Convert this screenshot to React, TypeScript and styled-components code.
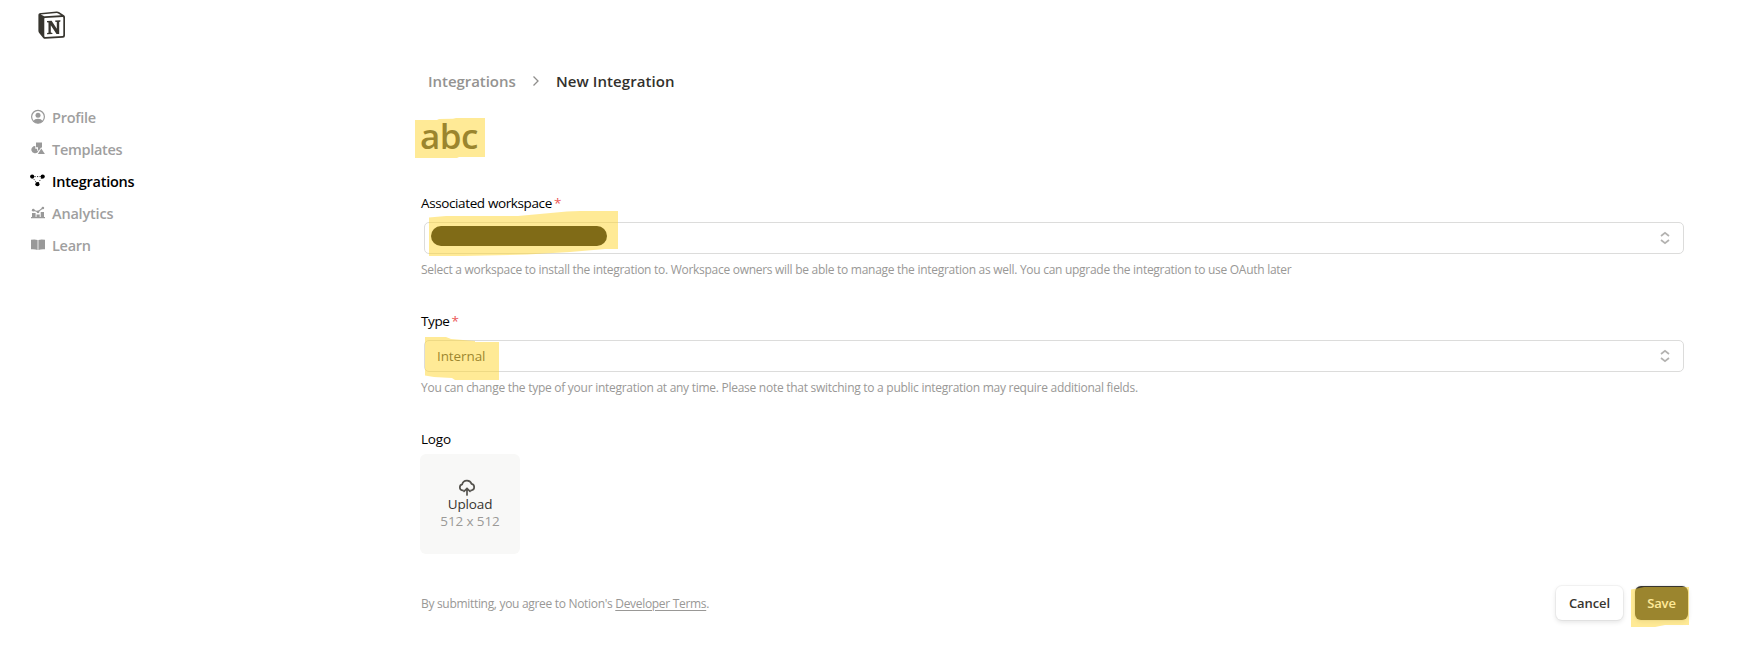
import React from 'react';
import styled, { createGlobalStyle } from 'styled-components';

const Global = createGlobalStyle`
  * { box-sizing: border-box; }
  body { margin: 0; background: #fff; font-family: 'Open Sans', 'Noto Sans', sans-serif; }
  #root { height: 646px; overflow: hidden; }
`;

const Page = styled.div`
  display: grid;
  grid-template-columns: 420px 1268px;
  height: 646px;
  position: relative;
`;

const Sidebar = styled.aside`
  display: flex;
  flex-direction: column;
  padding: 9px 0 0 30px;
`;

const LogoLink = styled.div`
  height: 32px;
  padding-left: 7px;
`;

const Nav = styled.nav`
  display: flex;
  flex-direction: column;
  margin-top: 60px;
`;

const NavItem = styled.a<{ $active?: boolean; $spacing: number }>`
  display: flex;
  align-items: center;
  gap: 6px;
  height: 32px;
  font-size: 14.5px;
  font-weight: 600;
  letter-spacing: ${(p) => p.$spacing}px;
  color: ${(p) => (p.$active ? '#000' : '#9f9f9f')};
  svg { flex: none; }
`;

const Main = styled.main`
  display: flex;
  flex-direction: column;
  padding-top: 65px;
`;

const Breadcrumb = styled.div`
  display: flex;
  align-items: center;
  height: 32px;
  padding-left: 8px;
  font-size: 15px;
`;

const Crumb = styled.span<{ $current?: boolean }>`
  width: ${(p) => (p.$current ? 'auto' : '89px')};
  color: ${(p) => (p.$current ? '#32302c' : '#949391')};
  font-weight: 600;
  letter-spacing: ${(p) => (p.$current ? 0.08 : -0.05)}px;
  white-space: nowrap;
`;

const Separator = styled.svg`
  margin: 0 15px 0 14px;
`;

const Title = styled.h1`
  margin: 15px 0 0;
  height: 48px;
  line-height: 48px;
  font-size: 35px;
  font-weight: 600;
  letter-spacing: -0.5px;
  color: #37352f;
`;

const Field = styled.section<{ $first?: boolean }>`
  display: flex;
  flex-direction: column;
  margin-top: ${(p) => (p.$first ? 33 : 31)}px;
`;

const Label = styled.label<{ $spacing: number }>`
  padding-left: 1px;
  height: 20px;
  line-height: 20px;
  font-size: 13.5px;
  letter-spacing: ${(p) => p.$spacing}px;
  color: #000;
`;

const Required = styled.span`
  margin-left: 2px;
  color: #eb5757;
`;

const Select = styled.div`
  display: flex;
  align-items: center;
  justify-content: space-between;
  height: 32px;
  margin: 9px 4px 0;
  padding: 0 13px 0 12px;
  border: 1px solid #dcdcdb;
  border-radius: 5px;
  font-size: 13.5px;
  letter-spacing: -0.1px;
  color: #37352f;
`;

const Redacted = styled.span`
  width: 176px;
  height: 20px;
  margin: -4px 0 0 -6px;
  border-radius: 10px;
  background: #000;
`;

const Caption = styled.p<{ $spacing: number }>`
  margin: 6px 0 0;
  padding-left: 1px;
  height: 20px;
  line-height: 20px;
  font-size: 12px;
  letter-spacing: ${(p) => p.$spacing}px;
  color: #999896;
  white-space: nowrap;
`;

const Upload = styled.div`
  display: flex;
  flex-direction: column;
  align-items: center;
  width: 100px;
  height: 100px;
  margin-top: 5px;
  padding-top: 24px;
  border-radius: 6px;
  background: #f8f8f7;
  font-size: 13.5px;
  letter-spacing: -0.12px;
  line-height: 17px;
  color: #37352f;
  svg { margin-right: 6px; flex: none; }
`;

const Hint = styled.span`
  color: #9b9a97;
`;

const Footer = styled.footer`
  display: flex;
  align-items: center;
  height: 34px;
  margin-top: 32px;
`;

const Terms = styled.p`
  flex: 1;
  margin: 0;
  padding-left: 1px;
  font-size: 12px;
  letter-spacing: -0.31px;
  color: #999896;
`;

const TermsLink = styled.a`
  text-decoration: underline;
  text-underline-offset: 2px;
`;

const Button = styled.button<{ $primary?: boolean }>`
  width: ${(p) => (p.$primary ? 53 : 67)}px;
  height: 34px;
  margin-left: ${(p) => (p.$primary ? 12 : 0)}px;
  padding: 0;
  border: 0;
  border-radius: 6px;
  background: ${(p) => (p.$primary ? '#37352f' : '#fff')};
  color: ${(p) => (p.$primary ? '#fff' : '#37352f')};
  box-shadow: 0 0 0 1px rgba(15, 15, 15, 0.04), 0 2px 5px rgba(15, 15, 15, 0.12);
  font: 600 13px 'Open Sans', sans-serif;
  letter-spacing: -0.1px;
`;

const Marker = styled.svg`
  position: absolute;
  left: 0;
  top: 0;
  pointer-events: none;
  fill: rgba(255, 213, 46, 0.5);
`;

const LogoMark = () => (
  <svg width="29" height="32" viewBox="0 0 29 32">
    <path d="M1.6 4.2 L19.6 2.4 Q21 2.3 22 3 L27 6.3 Q28 7 28 8.2 V26.4 Q28 28.6 26 28.8 L8.4 29.8 Q7 29.9 6.2 28.9 L2.2 24 Q1.4 23 1.4 21.8 V5.8 Q1.4 4.4 3 4.2Z" fill="#37352f" />
    <path d="M3.6 5.4 L19.8 4 Q20.6 4 21.2 4.4 L24 6.3 L8 7.3 Q7 7.3 6.3 6.8Z" fill="#fff" />
    <path d="M7.3 9.6 Q7.3 9 8 9 L25.6 8 Q26.3 8 26.3 8.7 V26.1 Q26.3 26.9 25.5 27 L8.2 28 Q7.3 28 7.3 27.2Z" fill="#fff" />
    <path d="M10 12 L14.6 11.7 L19.8 19.8 V13 L18.2 12.8 V11.6 L23.4 11.2 V12.5 L22.2 12.9 V24.9 L19.5 25.1 L13.8 16.3 V23.5 L15.4 23.9 V25 L10.1 25.3 V24.1 L11.5 23.7 V13.4 L10 13.2Z" fill="#37352f" />
  </svg>
);

const ProfileIcon = () => (
  <svg width="16" height="16" viewBox="0 0 16 16" fill="#999">
    <circle cx="8" cy="7.8" r="6.4" fill="none" stroke="#999" strokeWidth="1.2" />
    <circle cx="8" cy="6.2" r="2.5" />
    <path d="M3.3 12 Q4.6 9.7 8 9.7 T12.7 12 Q10.6 14.2 8 14.2 T3.3 12Z" />
  </svg>
);

const TemplatesIcon = () => (
  <svg width="16" height="16" viewBox="0 0 16 16" fill="#999">
    <path d="M6 1.5 H12 V7 L11.2 6.3 L9 9.5 H8 V6.3 H6Z" />
    <path d="M5.3 5 V7.7 H7.2 V9.8 H8.4 L7.4 11.5 A3.8 3.6 0 1 1 5.3 5Z" />
    <path d="M11.3 7.4 L14.9 13 H7.9Z" />
  </svg>
);

const IntegrationsIcon = () => (
  <svg width="16" height="16" viewBox="0 0 16 16">
    <path d="M2 3.6 H12.7 L7.4 11Z" fill="none" stroke="#000" strokeWidth=".8" strokeDasharray="1.2 1.3" />
    <circle cx="2.2" cy="3.6" r="2.1" />
    <circle cx="12.7" cy="3.6" r="2.1" />
    <circle cx="7.4" cy="11.2" r="2.1" />
  </svg>
);

const AnalyticsIcon = () => (
  <svg width="16" height="16" viewBox="0 0 16 16" fill="#999">
    <path d="M1 12 H15 V13.3 H1Z M2 8 H5.6 V12.5 H2Z M6.5 9.4 H9.7 V12.5 H6.5Z M10.7 7 H14 V12.5 H10.7Z" />
    <path d="M3.3 5.2 L8 6.7 L12.8 3" fill="none" stroke="#999" strokeWidth="1.1" />
    <circle cx="3.3" cy="5.2" r="1.4" />
    <circle cx="8" cy="6.8" r="1.4" />
    <circle cx="12.9" cy="3" r="1.3" />
  </svg>
);

const LearnIcon = () => (
  <svg width="16" height="16" viewBox="0 0 16 16" fill="#999">
    <path d="M1 2.8 Q4.8 2 7.6 2.9 V13 Q4.8 11.9 1 12.3Z M8.4 2.9 Q11.2 2 15 2.8 V12.3 Q11.2 11.9 8.4 13Z" />
  </svg>
);

const Chevrons = () => (
  <svg width="10" height="14" viewBox="0 0 10 14" fill="none" stroke="#b3b2b0" strokeWidth="1.7">
    <path d="M1 5 L5 1.8 L9 5 M1 9 L5 12.2 L9 9" />
  </svg>
);

const UploadIcon = () => (
  <svg width="18" height="18" viewBox="0 0 18 18" fill="none" stroke="#55534e" strokeWidth="1.7" strokeLinecap="round">
    <path d="M5 12.3 H4.4 A3 3 0 0 1 4.2 6.4 A4.9 4.9 0 0 1 13.6 5.9 A3.3 3.3 0 0 1 13.8 12.3 H13" />
    <path d="M9 17 V10.8 M6 13.3 L9 10.5 L12 13.3" />
  </svg>
);

export default function App() {
  return (
    <Page>
      <Global />
      <Sidebar>
        <LogoLink><LogoMark /></LogoLink>
        <Nav>
          <NavItem $spacing={-0.25}><ProfileIcon />Profile</NavItem>
          <NavItem $spacing={-0.3}><TemplatesIcon />Templates</NavItem>
          <NavItem $active $spacing={-0.25}><IntegrationsIcon />Integrations</NavItem>
          <NavItem $spacing={-0.2}><AnalyticsIcon />Analytics</NavItem>
          <NavItem $spacing={-0.3}><LearnIcon />Learn</NavItem>
        </Nav>
      </Sidebar>
      <Main>
        <Breadcrumb>
          <Crumb>Integrations</Crumb>
          <Separator width="10" height="12" viewBox="0 0 10 12" fill="none" stroke="#8f8e8c" strokeWidth="1.3">
            <path d="M2.5 1.5 L7 6 L2.5 10.5" />
          </Separator>
          <Crumb $current>New Integration</Crumb>
        </Breadcrumb>
        <Title>abc</Title>
        <Field $first>
          <Label $spacing={-0.38}>Associated workspace<Required>*</Required></Label>
          <Select><Redacted /><Chevrons /></Select>
          <Caption $spacing={-0.28}>Select a workspace to install the integration to. Workspace owners will be able to manage the integration as well. You can upgrade the integration to use OAuth later</Caption>
        </Field>
        <Field>
          <Label $spacing={-0.38}>Type<Required>*</Required></Label>
          <Select>Internal<Chevrons /></Select>
          <Caption $spacing={-0.27}>You can change the type of your integration at any time. Please note that switching to a public integration may require additional fields.</Caption>
        </Field>
        <Field>
          <Label $spacing={-0.2}>Logo</Label>
          <Upload>
            <UploadIcon />
            <span>Upload</span>
            <Hint>512 x 512</Hint>
          </Upload>
        </Field>
        <Footer>
          <Terms>By submitting, you agree to Notion's <TermsLink>Developer Terms</TermsLink>.</Terms>
          <Button>Cancel</Button>
          <Button $primary>Save</Button>
        </Footer>
      </Main>
      <Marker width="1760" height="646" viewBox="0 0 1760 646">
        <path d="M415 120 H437 L439 119 L453 118.7 L456 118 H485 V157 H459 L457 158 H415Z" />
        <path d="M429 217.5 L446 216 H518 L567 211.5 L580 211 H618 V249 H605 L570 252 L527 254.5 L463 256 H429Z" />
        <path d="M425 337 H446 L451 339 L475 341 V342 H499 V380 H455 L452 378 L434 377 L425 375.5Z" />
        <path d="M1631 589.5 L1637 588.5 L1644 587 H1689 V625 H1665 L1655 627 H1631Z" />
      </Marker>
    </Page>
  );
}
